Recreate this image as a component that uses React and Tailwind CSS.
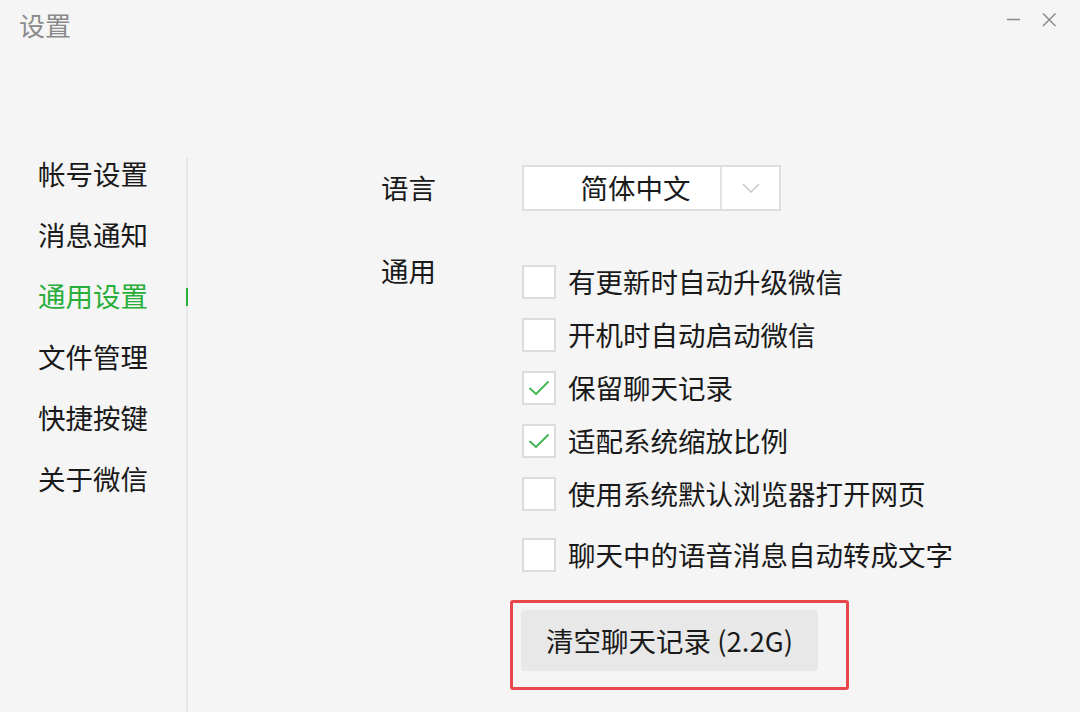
import React from 'react';

const font = { fontFamily: '"Noto Sans CJK SC", "Noto Sans", sans-serif' };

function CheckRow({ label, checked, className = '' }) {
  return (
    <div className={`h-[53px] flex items-center ${className}`}>
      <div className="w-[34px] h-[34px] border-2 border-[#dcdcdc] bg-white flex items-center justify-center shrink-0">
        {checked && (
          <svg width="22" height="16" viewBox="0 0 22 16" fill="none">
            <path d="M2 8.5 L8 14 L20 2" stroke="#3fb550" strokeWidth="1.8" strokeLinecap="round" strokeLinejoin="round" />
          </svg>
        )}
      </div>
      <span className="ml-[12px] text-[27.5px] leading-none text-[#1a1a1a]">{label}</span>
    </div>
  );
}

export default function App() {
  const menu = ['帐号设置', '消息通知', '通用设置', '文件管理', '快捷按键', '关于微信'];
  const options = [
    { label: '有更新时自动升级微信', checked: false },
    { label: '开机时自动启动微信', checked: false },
    { label: '保留聊天记录', checked: true },
    { label: '适配系统缩放比例', checked: true },
    { label: '使用系统默认浏览器打开网页', checked: false },
  ];

  return (
    <div className="w-[1080px] h-[712px] bg-[#f5f5f5] overflow-hidden flex flex-col" style={font}>
      {/* Title bar */}
      <div className="h-[158px] shrink-0 flex items-start justify-between">
        <span className="ml-[19px] mt-[8px] text-[26px] leading-[34px] text-[#8a8a8a]">设置</span>
        <div className="flex items-center mt-[12px] mr-[23px] gap-[20px]">
          <svg width="16" height="16" viewBox="0 0 16 16">
            <path d="M2 7.5 H15" stroke="#8c8c8c" strokeWidth="1.6" />
          </svg>
          <svg width="16" height="16" viewBox="0 0 16 16">
            <path d="M2 1.5 L14.5 14 M14.5 1.5 L2 14" stroke="#8c8c8c" strokeWidth="1.5" />
          </svg>
        </div>
      </div>

      <div className="flex flex-1">
        {/* Sidebar */}
        <div className="w-[188px] border-r-2 border-[#e8e8e8] relative flex flex-col gap-[29px] pl-[38px]">
          {menu.map((m, i) => (
            <div
              key={m}
              className={`h-[32px] flex items-center text-[27.5px] leading-none ${i === 2 ? 'text-[#2aae3a]' : 'text-[#1a1a1a]'}`}
            >
              {m}
            </div>
          ))}
          <div className="absolute right-[-2px] top-[130px] w-[2px] h-[18px] bg-[#2aae3a]" />
        </div>

        {/* Content */}
        <div className="flex flex-col pl-[193px] pt-[7px]">
          <div className="flex items-center h-[46px]">
            <span className="w-[141px] text-[27.5px] leading-none text-[#1a1a1a]">语言</span>
            <div className="flex w-[259px] h-[46px] border-2 border-[#dedede] bg-white">
              <div className="w-[198px] flex items-center justify-center pl-[27px] text-[27.5px] leading-none text-[#1a1a1a] border-r-2 border-[#e4e4e4]">
                简体中文
              </div>
              <div className="flex-1 flex items-center justify-center">
                <svg width="18" height="10" viewBox="0 0 18 10" fill="none">
                  <path d="M1 1 L9 9 L17 1" stroke="#c8c8c8" strokeWidth="1.5" />
                </svg>
              </div>
            </div>
          </div>

          <div className="flex mt-[44px]">
            <span className="w-[141px] h-[32px] flex items-center text-[27.5px] leading-none text-[#1a1a1a]">通用</span>
            <div className="flex flex-col">
              {options.map((o) => (
                <CheckRow key={o.label} label={o.label} checked={o.checked} />
              ))}
              <CheckRow label="聊天中的语音消息自动转成文字" checked={false} className="mt-[8px]" />

              <div className="mt-[19px] ml-[-12px] w-[339px] h-[90px] border-[3px] border-[#e8474a] rounded-[3px] pl-[8px] pt-[7px]">
                <button className="w-[297px] h-[61px] rounded-[4px] bg-[#e8e8e8] text-[27.5px] leading-none text-[#1a1a1a]">
                  清空聊天记录 (2.2G)
                </button>
              </div>
            </div>
          </div>
        </div>
      </div>
    </div>
  );
}
